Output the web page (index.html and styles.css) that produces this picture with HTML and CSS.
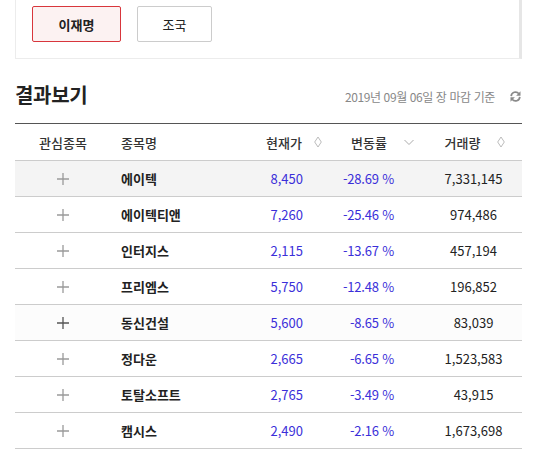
FILE: index.html
```html
<!DOCTYPE html>
<html lang="ko">
<head>
<meta charset="utf-8">
<link rel="stylesheet" href="styles.css">
</head>
<body>
<div class="page">
  <div class="filter-box">
    <button class="btn btn-active">이재명</button>
    <button class="btn">조국</button>
  </div>

  <div class="result-head">
    <h2 class="title">결과보기</h2>
    <div class="meta">
      <span class="date">2019년 09월 06일 장 마감 기준</span>
      <svg class="refresh" viewBox="0 0 12 12" width="13" height="13">
        <path d="M2 5.6A4 4 0 0 1 9.1 3.4" fill="none" stroke="#8a8a8a" stroke-width="1.6"/>
        <path d="M10.6 1.2V5.2H6.6Z" fill="#8a8a8a"/>
        <path d="M10 6.4A4 4 0 0 1 2.9 8.6" fill="none" stroke="#8a8a8a" stroke-width="1.6"/>
        <path d="M1.4 10.8V6.8H5.4Z" fill="#8a8a8a"/>
      </svg>
    </div>
  </div>

  <div class="table">
    <div class="row head">
      <div class="c1">관심종목</div>
      <div class="c2">종목명</div>
      <div class="c3 sort"><span>현재가</span>
        <svg class="ico-diamond" viewBox="0 0 8 12" width="8" height="12"><path d="M4 1L7.3 6L4 11L0.7 6Z" fill="none" stroke="#bbbbbb" stroke-width="1"/></svg>
      </div>
      <div class="c4 sort"><span>변동률</span>
        <svg class="ico-chev" viewBox="0 0 10 8" width="10" height="8"><path d="M0.5 2L5 6.5L9.5 2" fill="none" stroke="#aaaaaa" stroke-width="1"/></svg>
      </div>
      <div class="c5 sort"><span>거래량</span>
        <svg class="ico-diamond" viewBox="0 0 8 12" width="8" height="12"><path d="M4 1L7.3 6L4 11L0.7 6Z" fill="none" stroke="#bbbbbb" stroke-width="1"/></svg>
      </div>
    </div>

    <div class="row item selected">
      <div class="c1"><svg class="plus" viewBox="0 0 12 12" width="12" height="12"><path d="M6 0V12M0 6H12" stroke="#9a9a9a" stroke-width="1.3"/></svg></div>
      <div class="c2 name">에이텍</div>
      <div class="c3 price">8,450</div>
      <div class="c4 rate">-28.69 %</div>
      <div class="c5 vol">7,331,145</div>
    </div>
    <div class="row item">
      <div class="c1"><svg class="plus" viewBox="0 0 12 12" width="12" height="12"><path d="M6 0V12M0 6H12" stroke="#9a9a9a" stroke-width="1.3"/></svg></div>
      <div class="c2 name">에이텍티앤</div>
      <div class="c3 price">7,260</div>
      <div class="c4 rate">-25.46 %</div>
      <div class="c5 vol">974,486</div>
    </div>
    <div class="row item">
      <div class="c1"><svg class="plus" viewBox="0 0 12 12" width="12" height="12"><path d="M6 0V12M0 6H12" stroke="#9a9a9a" stroke-width="1.3"/></svg></div>
      <div class="c2 name">인터지스</div>
      <div class="c3 price">2,115</div>
      <div class="c4 rate">-13.67 %</div>
      <div class="c5 vol">457,194</div>
    </div>
    <div class="row item">
      <div class="c1"><svg class="plus" viewBox="0 0 12 12" width="12" height="12"><path d="M6 0V12M0 6H12" stroke="#9a9a9a" stroke-width="1.3"/></svg></div>
      <div class="c2 name">프리엠스</div>
      <div class="c3 price">5,750</div>
      <div class="c4 rate">-12.48 %</div>
      <div class="c5 vol">196,852</div>
    </div>
    <div class="row item hover">
      <div class="c1"><svg class="plus" viewBox="0 0 12 12" width="12" height="12"><path d="M6 0V12M0 6H12" stroke="#555555" stroke-width="1.3"/></svg></div>
      <div class="c2 name">동신건설</div>
      <div class="c3 price">5,600</div>
      <div class="c4 rate">-8.65 %</div>
      <div class="c5 vol">83,039</div>
    </div>
    <div class="row item">
      <div class="c1"><svg class="plus" viewBox="0 0 12 12" width="12" height="12"><path d="M6 0V12M0 6H12" stroke="#9a9a9a" stroke-width="1.3"/></svg></div>
      <div class="c2 name">정다운</div>
      <div class="c3 price">2,665</div>
      <div class="c4 rate">-6.65 %</div>
      <div class="c5 vol">1,523,583</div>
    </div>
    <div class="row item">
      <div class="c1"><svg class="plus" viewBox="0 0 12 12" width="12" height="12"><path d="M6 0V12M0 6H12" stroke="#9a9a9a" stroke-width="1.3"/></svg></div>
      <div class="c2 name">토탈소프트</div>
      <div class="c3 price">2,765</div>
      <div class="c4 rate">-3.49 %</div>
      <div class="c5 vol">43,915</div>
    </div>
    <div class="row item">
      <div class="c1"><svg class="plus" viewBox="0 0 12 12" width="12" height="12"><path d="M6 0V12M0 6H12" stroke="#9a9a9a" stroke-width="1.3"/></svg></div>
      <div class="c2 name">캠시스</div>
      <div class="c3 price">2,490</div>
      <div class="c4 rate">-2.16 %</div>
      <div class="c5 vol">1,673,698</div>
    </div>
  </div>
</div>
</body>
</html>
```

FILE: styles.css
```css
* { box-sizing: border-box; }

html, body {
  margin: 0;
  padding: 0;
  background: #ffffff;
  font-family: "Noto Sans CJK KR", "Noto Sans", sans-serif;
  color: #222222;
  overflow: hidden;
}

.page {
  width: 541px;
  padding: 0 19px 0 15px;
}

.filter-box {
  display: flex;
  gap: 16px;
  padding: 6px 0 16px 16px;
  border-left: 1px solid #ececec;
  border-bottom: 1px solid #ececec;
  border-right: 3px solid #e6e6e6;
}

.btn {
  height: 36px;
  padding: 0;
  border: 1px solid #cccccc;
  border-radius: 2px;
  background: #ffffff;
  font-family: inherit;
  font-size: 13px;
  color: #222222;
  line-height: 1;
  width: 75px;
}

.btn-active {
  width: 89px;
  border-color: #d8363c;
  background: #fcf2f2;
  font-weight: bold;
}

.result-head {
  display: flex;
  align-items: center;
  justify-content: space-between;
  height: 30px;
  margin-top: 20px;
  margin-bottom: 14px;
}

.title {
  margin: 0;
  font-size: 20px;
  font-weight: bold;
  color: #222222;
  letter-spacing: -0.3px;
}

.meta {
  display: flex;
  align-items: center;
  gap: 14px;
  padding-top: 4px;
}

.date {
  font-size: 12px;
  color: #888888;
  letter-spacing: -0.4px;
}

.refresh { display: block; }

.table {
  border-top: 1px solid #555555;
}

.row {
  display: grid;
  grid-template-columns: 96px 134px 80px 100px 97px;
  align-items: center;
  height: 36px;
  border-bottom: 1px solid #cccccc;
  font-size: 13px;
}

.row.head {
  height: 37px;
  color: #333333;
  font-weight: 500;
}

.c1 { text-align: center; display: flex; justify-content: center; }
.c2 { padding-left: 10px; }
.c3 { text-align: right; padding-right: 22px; }
.c4 { text-align: right; padding-right: 31px; }
.c5 { text-align: center; }

.sort {
  display: flex;
  align-items: center;
}
.head .c3 { justify-content: flex-end; gap: 12px; padding-right: 3px; }
.head .c4 { justify-content: flex-end; gap: 17px; padding-right: 11px; }
.head .c5 { justify-content: center; gap: 17px; padding-left: 3px; }

.ico-diamond, .ico-chev { display: block; }

.item.selected { background: #f4f4f4; }
.item.hover { background: #fcfcfc; }

.plus { display: block; }

.name { font-weight: bold; color: #222222; }
.price { color: #3b2fd9; }
.rate { color: #3b2fd9; letter-spacing: -0.2px; }
.vol { color: #222222; }
```
